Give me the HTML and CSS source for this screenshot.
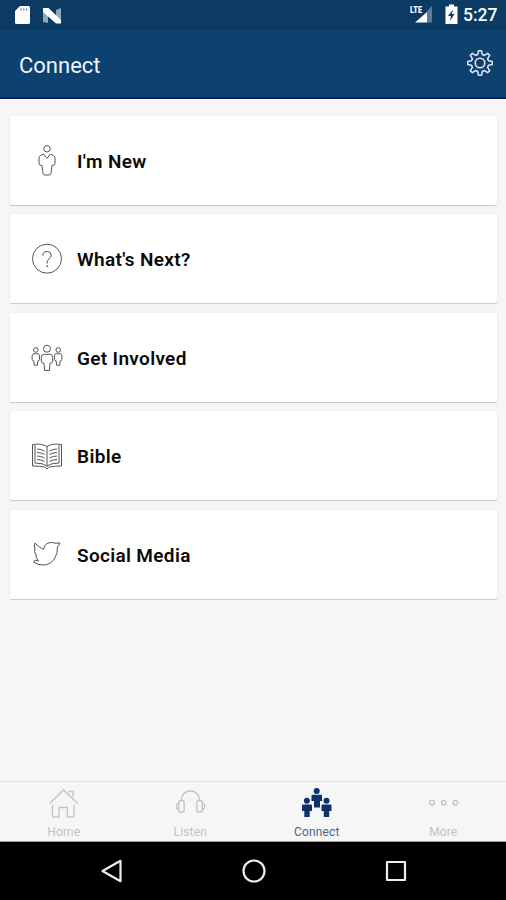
FILE: index.html
```html
<!DOCTYPE html>
<html lang="en">
<head>
    <meta charset="UTF-8">
    <meta name="viewport" content="width=device-width, initial-scale=1.0">
    <title>Connect</title>
    <link rel="stylesheet" href="styles.css">
</head>
<body>

    <div class="status">
        <svg class="status-left" width="50" height="20" viewBox="0 0 50 20">
            <path d="M6 1h8.500q1.500 0 1.500 1.500v15q0 1.500-1.500 1.500h-12q-1.500 0-1.500-1.500V6z" fill="#fff"/>
            <path d="M7 3.500v2M9.800 3.500v2M12.600 3.500v2" stroke="#6d8299" stroke-width="1.300"/>
            <path d="M29 4l5 4v10l-5-1zM42 5l5-2v14l-5-3z" fill="#8da9c0"/>
            <path d="M29 3h5.500l12.500 12v3.500h-5L29 7z" fill="#fff"/>
        </svg>
        <svg class="status-right" width="50" height="22" viewBox="0 0 50 22">
            <text class="lte" x="0" y="9" textLength="12" lengthAdjust="spacingAndGlyphs">LTE</text>
            <path d="M17 7l5-5v16.500h-5z" fill="#597e9c"/>
            <path d="M5 18.500L17 8v10.500z" fill="#fff"/>
            <path d="M36 2.500h3v-2h5v2h3.500v17.500h-12V2.500z" fill="#fff"/>
            <path d="M43 5.500l-5 6.500h3l-1 5 4.500-7h-2.700z" fill="#0b3a63"/>
        </svg>
        <span class="time">5:27</span>
    </div>

    <div class="header">
        <h1>Connect</h1>
        <svg class="gear" width="28" height="28" viewBox="-14 -14 28 28">
            <path d="M-2.300-8.500L-1.500-12.200h3L2.300-8.500 4.400-7.600 7.600-9.700 9.700-7.600 7.600-4.400 8.500-2.300 12.200-1.500v3L8.500 2.300 7.600 4.400 9.700 7.600 7.600 9.700 4.400 7.600 2.300 8.500 1.500 12.200h-3L-2.300 8.500-4.400 7.600-7.600 9.700-9.700 7.600-7.600 4.400-8.500 2.300-12.200 1.500v-3L-8.500-2.300-7.600-4.400-9.700-7.600-7.600-9.700-4.400-7.600z"/>
            <circle r="4.800"/>
        </svg>
    </div>

    <div class="list">
        <div class="card">
            <svg class="icon" width="32" height="32" viewBox="0 0 32 32">
                <circle cx="16" cy="3.800" r="3.200"/>
                <path d="M12.500 9L9.500 10.500q-1.500.7-1.500 2.500V18.500q0 2 3 2l1 7.500q.2 2 2 2h4q1.800 0 2-2l1-7.500q3 0 3-2v-5.500q0-1.800-1.500-2.500l-3-1.500L16 13.500z"/>
            </svg>
            <span>I'm New</span>
        </div>
        <div class="card">
            <svg class="icon" width="32" height="32" viewBox="0 0 32 32">
                <circle cx="16" cy="15.700" r="14.500"/>
                <path d="M11.800 12.700q0-4.200 4.400-4.200 4 0 4 3.700 0 2-2 3.500-2.100 1.600-2.100 4v1"/>
                <circle cx="16.100" cy="23.200" r=".6"/>
            </svg>
            <span>What's Next?</span>
        </div>
        <div class="card">
            <svg class="icon" width="32" height="32" viewBox="0 0 32 32">
                <circle cx="16" cy="7.700" r="3.500"/>
                <path d="M13.500 13q-3.200.5-3.200 3.300v4.200q0 1.700 2.700 1.800l.6 7.200h4.800l.6-7.200q2.700-.1 2.700-1.800v-4.200q0-2.800-3.200-3.300-2.500 1.500-5 0z"/>
                <circle cx="4.800" cy="9" r="2.300"/>
                <path d="M3 12.500q-1.900.5-1.900 2.500v3.300q0 1.500 1.700 1.700l.5 4.300h3l.5-4.300q1.700-.2 1.700-1.700v-3.300q0-2-1.800-2.500-1.800 1-3.700 0z"/>
                <circle cx="27.200" cy="9" r="2.300"/>
                <path d="M25.400 12.500q-1.900.5-1.900 2.500v3.300q0 1.500 1.700 1.700l.5 4.300h3l.5-4.300q1.700-.2 1.700-1.700v-3.300q0-2-1.800-2.500-1.800 1-3.700 0z"/>
            </svg>
            <span>Get Involved</span>
        </div>
        <div class="card">
            <svg class="icon" width="32" height="32" viewBox="0 0 32 32">
                <path d="M16 6.500Q10 3 1.500 4.500v21.500q8 0 12 1q1.200.5 2.500 2 1.300-1.500 2.500-2q4-1 12-1v-21.500Q22 3 16 6.500v20"/>
                <path d="M4 5v18q8 0 12 3 4-3 12-3V5"/>
                <path d="M6 9q4 0 7.500 2M6 12.500q4 0 7.500 2M6 16q4 0 7.500 2M6 19.500q4 0 7.500 2M26 9q-4 0-7.500 2M26 12.500q-4 0-7.500 2M26 16q-4 0-7.500 2M26 19.500q-4 0-7.500 2"/>
            </svg>
            <span>Bible</span>
        </div>
        <div class="card">
            <svg class="icon" width="32" height="32" viewBox="0 0 32 32">
                <path d="M4 5q3.500 4 8.500 6.500Q13.500 6 18 4.800q3.500-.8 6 .4l5-.2q-.7 2-2.600 3.800.5 6.500-2.400 11Q20 27 12 27q-5.500 0-9-2.800 0-1.700 1-2l3.500.8Q4.500 19.500 5 17L3.500 13.500 4 11Q2.500 8 4 5z"/>
            </svg>
            <span>Social Media</span>
        </div>
    </div>

    <div class="tabs">
        <div class="tab">
            <svg width="32" height="32" viewBox="0 0 32 32">
                <path d="M2.500 16.500L16.500 3 30.800 16.500M5.500 17.500v12.300h6.500V20.500h8.300v9.300H27V17.500M21.500 4.500h4.500v5.500"/>
            </svg>
            <span>Home</span>
        </div>
        <div class="tab">
            <svg width="32" height="32" viewBox="0 0 32 32">
                <path d="M7.500 13.500V12Q9 4 16.500 4T25.500 12v1.500"/>
                <rect x="4.700" y="13.500" width="5.500" height="11.500" rx="2"/>
                <rect x="22.800" y="13.500" width="5.500" height="11.500" rx="2"/>
                <path d="M4.700 16q-2.500 1-2.500 3.300t2.500 3.300M28.300 16q2.500 1 2.500 3.300t-2.500 3.300"/>
            </svg>
            <span>Listen</span>
        </div>
        <div class="tab active">
            <svg width="32" height="32" viewBox="0 0 32 32">
                <circle cx="16.700" cy="4" r="3"/>
                <path d="M12.500 7.800h8.500q1 0 1 1v5.200h-2v6.500h-6V14h-2.500V8.800q0-1 1-1z"/>
                <circle cx="6.900" cy="13.700" r="3"/>
                <path d="M3 17.500h8q1 0 1 1V24H9.700v6H4.300v-6H2v-5.500q0-1 1-1z"/>
                <circle cx="26.500" cy="13.700" r="3"/>
                <path d="M22.500 17.500h8q1 0 1 1V24h-2.300v6h-5.400v-6h-2.300v-5.500q0-1 1-1z"/>
            </svg>
            <span>Connect</span>
        </div>
        <div class="tab">
            <svg width="32" height="32" viewBox="0 0 32 32">
                <circle cx="5" cy="15.700" r="2.300"/>
                <circle cx="16.700" cy="15.700" r="2.300"/>
                <circle cx="28.400" cy="15.700" r="2.300"/>
            </svg>
            <span>More</span>
        </div>
    </div>

    <div class="navbar">
        <svg width="26" height="26" viewBox="0 0 26 26"><path d="M3.500 13L21.500 2.800v20.400z"/></svg>
        <svg width="26" height="26" viewBox="0 0 26 26"><circle cx="13" cy="13" r="10.500"/></svg>
        <svg width="26" height="26" viewBox="0 0 26 26"><rect x="4" y="4" width="18" height="18"/></svg>
    </div>

</body>
</html>
```
FILE: styles.css
```css
* {
    box-sizing: border-box;
}
body {
    margin: 0;
    height: 900px;
    display: flex;
    flex-direction: column;
    background-color: #f6f6f6;
    font-family: Roboto, sans-serif;
    overflow: hidden;
}
svg {
    display: block;
    flex-shrink: 0;
}
.status {
    height: 30px;
    display: flex;
    align-items: center;
    padding: 0 9px 0 14px;
    background-color: #0b3a62;
    color: white;
}
.status-right {
    margin-left: auto;
}
.lte {
    font-size: 9px;
    font-weight: 900;
    fill: white;
}
.time {
    width: 34px;
    margin-left: 3px;
    font-size: 17.5px;
    font-weight: 500;
    line-height: 30px;
    white-space: nowrap;
}
.header {
    height: 69px;
    display: flex;
    justify-content: space-between;
    padding: 19px 12px 0 19px;
    background-color: #0d416f;
    border-bottom: 2px solid #09245a;
    color: #f0f3fa;
}
.header h1 {
    margin: 0;
    font-size: 22px;
    font-weight: 450;
    line-height: 34px;
}
.gear {
    fill: none;
    stroke: #dfe5f4;
    stroke-width: 1.6;
    stroke-linejoin: round;
}
.list {
    flex: 1;
    display: flex;
    flex-direction: column;
    gap: 9.4px;
    padding: 17px 9px 0 10px;
}
.card {
    height: 89px;
    display: flex;
    align-items: center;
    padding-left: 21px;
    background-color: white;
    border-radius: 1px;
    box-shadow: 0 1px 1px #c9c9c9, 0 0 2px #e2e2e2;
    font-size: 19px;
    font-weight: 600;
    letter-spacing: 0.33px;
    color: #0b0b0b;
}
.card span {
    margin-left: 14px;
    padding-top: 2px;
}
.icon {
    fill: none;
    stroke: #555;
    stroke-width: 1;
    stroke-linejoin: round;
}
.tabs {
    height: 61px;
    display: flex;
    padding-top: 5px;
    border-top: 1px solid #e2e2e2;
    border-bottom: 1px solid #999;
}
.tab {
    flex: 1;
    display: flex;
    flex-direction: column;
    align-items: center;
    font-size: 12px;
    line-height: 14px;
    letter-spacing: 0.15px;
    color: #c3c3c3;
}
.tab svg {
    fill: none;
    stroke: #c2c2c2;
    stroke-width: 1.3;
}
.tab span {
    margin: 6px 0 0 1px;
}
.tab.active {
    color: #56608a;
}
.tab.active svg {
    fill: #0d316b;
    stroke: none;
}
.navbar {
    height: 58px;
    display: flex;
    justify-content: space-between;
    align-items: center;
    padding: 0 97px 0 99px;
    background-color: black;
}
.navbar svg {
    fill: none;
    stroke: #eee;
    stroke-width: 2.2;
    stroke-linejoin: round;
}
```
